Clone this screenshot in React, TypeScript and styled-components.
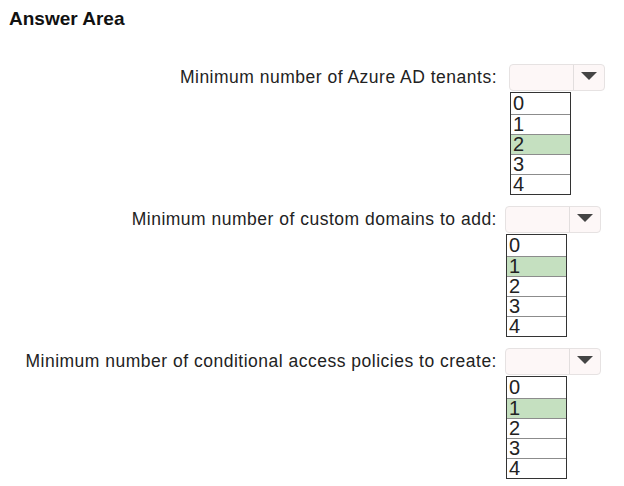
import { FC } from "react";
import styled, { createGlobalStyle } from "styled-components";

const GlobalStyle = createGlobalStyle`
  body {
    margin: 0;
    background: #fff;
    font-family: "Liberation Sans", Arial, sans-serif;
    color: #1a1a1a;
  }
`;

const Page = styled.div`
  width: 624px;
  height: 486px;
  padding-top: 8px;
  box-sizing: border-box;
  overflow: hidden;
`;

const Title = styled.h1`
  margin: 0 0 35px 9px;
  font-size: 19px;
  font-weight: bold;
  line-height: 21px;
  color: #111;
`;

const Question = styled.div`
  display: grid;
  grid-template-columns: 497px 1fr;
  margin-bottom: 11px;
`;

const Label = styled.div`
  grid-column: 1;
  text-align: right;
  font-size: 17.5px;
  line-height: 27px;
  color: #222;
  letter-spacing: 0.5px;
  white-space: nowrap;
`;

const Select = styled.div<{ $shift: number }>`
  grid-column: 2;
  margin-left: ${({ $shift }) => 10 + $shift}px;
  width: 96px;
  height: 27px;
  box-sizing: border-box;
  border: 1px solid #e6e2e2;
  border-radius: 4px;
  background: #fdf7f7;
  display: flex;
`;

const SelectValue = styled.div`
  width: 63px;
  border-right: 1px solid #e2dede;
`;

const Arrow = styled.div`
  flex: 1;
  display: flex;
  align-items: center;
  justify-content: center;
  padding-bottom: 4px;

  svg {
    width: 16px;
    height: 8px;
  }
`;

const List = styled.div<{ $shift: number }>`
  grid-column: 2;
  margin-left: ${({ $shift }) => 11 + $shift}px;
  margin-top: 1px;
  width: 61px;
  border: 1.5px solid #333;
  box-sizing: border-box;
`;

const Option = styled.div<{ $selected?: boolean }>`
  height: 20px;
  box-sizing: border-box;
  padding-left: 2px;
  font-size: 20px;
  line-height: 19px;
  color: #222;
  background: ${({ $selected }) => ($selected ? "#c5e0c0" : "#fff")};
  border-top: 1px solid #8c8c8c;

  &:first-child {
    border-top: none;
    height: 21px;
    line-height: 21px;
  }
`;

const questions = [
  { label: "Minimum number of Azure AD tenants:", selected: 2, shift: 2 },
  { label: "Minimum number of custom domains to add:", selected: 1, shift: -2 },
  {
    label: "Minimum number of conditional access policies to create:",
    selected: 1,
    shift: -2,
  },
];

const App: FC = () => (
  <Page>
    <GlobalStyle />
    <Title>Answer Area</Title>
    {questions.map((q) => (
      <Question key={q.label}>
        <Label>{q.label}</Label>
        <Select $shift={q.shift}>
          <SelectValue />
          <Arrow>
            <svg viewBox="0 0 16 8">
              <path d="M0 0 L16 0 L8 8 Z" fill="#444" />
            </svg>
          </Arrow>
        </Select>
        <Label />
        <List $shift={q.shift}>
          {[0, 1, 2, 3, 4].map((n) => (
            <Option key={n} $selected={n === q.selected}>
              {n}
            </Option>
          ))}
        </List>
      </Question>
    ))}
  </Page>
);

export default App;
